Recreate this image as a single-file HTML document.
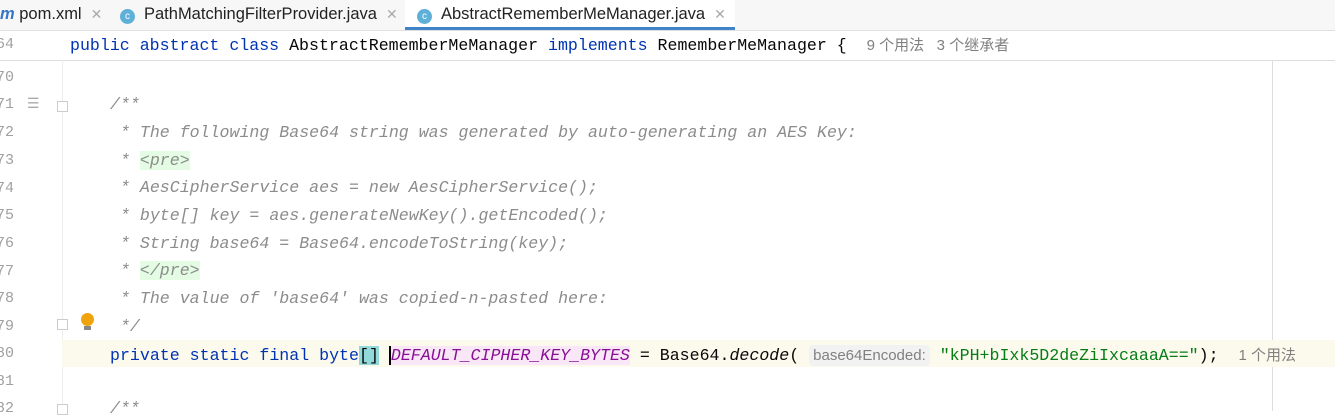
<!DOCTYPE html>
<html><head><meta charset="utf-8"><style>
body{margin:0;width:1335px;height:411px;overflow:hidden;background:#fff;font-family:"Liberation Mono",monospace;position:relative}
.tabs{position:absolute;left:0;top:0;width:1335px;height:30px;background:#f7f7f7;border-bottom:1px solid #e0e0e0;font-family:"Liberation Sans",sans-serif;font-size:16.5px;color:#222}
.tab{position:absolute;top:0;height:30px;line-height:28px;white-space:nowrap}
.ic{display:inline-block;width:15px;height:15px;border-radius:50%;background:#5fb0d8;color:#fff;font-size:10px;line-height:15px;text-align:center;vertical-align:0px;margin-right:9px}
.x{color:#aaa;margin-left:9px;font-size:14px}
.ln{position:absolute;left:-30px;width:44px;text-align:right;color:#a0a0a0;font-size:15px}
.code{position:absolute;left:70px;white-space:pre;font-size:16.6px;color:#080808}
.k{color:#0033b3}.c{color:#8c8c8c;font-style:italic}.s{color:#067d17}
.hint{font-family:"Liberation Sans","Noto Sans CJK SC",sans-serif;font-size:15px;color:#808080;font-style:normal}
.fold{position:absolute;left:57px;width:9px;height:9px;border:1px solid #ccc;background:#fff}
</style></head><body>
<div class="tabs">
<div class="tab" style="left:0"><span style="color:#3575c8;font-weight:bold;font-style:italic">m</span> pom.xml<span class="x">✕</span></div>
<div class="tab" style="left:120px"><span class="ic">c</span>PathMatchingFilterProvider.java<span class="x">✕</span></div>
<div class="tab" style="left:405px;width:330px;background:#fff;padding-left:12px;box-sizing:border-box;border-bottom:3px solid #4083c9"><span class="ic">c</span>AbstractRememberMeManager.java<span class="x">✕</span></div>
</div>
<div style="position:absolute;left:0;top:31px;width:1335px;height:29px;border-bottom:1px solid #ddd;background:#fff"></div>
<div style="position:absolute;left:62px;top:60px;width:1px;height:351px;background:#eee"></div>
<div style="position:absolute;left:1272px;top:60px;width:1px;height:351px;background:#ddd"></div>
<div style="position:absolute;left:0;top:340px;width:1335px;height:27px;background:#fcfaed"></div>
<div style="position:absolute;left:0;top:340px;width:62px;height:27px;background:#fff"></div>
<div class="ln" style="top:36px">64</div>
<div class="code" style="top:34px"><span class="k">public abstract class</span> AbstractRememberMeManager <span class="k">implements</span> RememberMeManager {  <span class="hint">9 个用法&nbsp;&nbsp; 3 个继承者</span></div>
<div class="ln" style="top:69px">70</div>
<div class="ln" style="top:96px">71</div>
<div style="position:absolute;left:27px;top:96px;color:#aaa;font-size:14px">☰</div>
<div class="fold" style="top:101px"></div>
<div class="code" style="top:95px;left:110px"><span class="c">/**</span></div>
<div class="ln" style="top:124px">72</div><div class="code c" style="top:123px;left:110px"> * The following Base64 string was generated by auto-generating an AES Key:</div>
<div class="ln" style="top:152px">73</div><div class="code c" style="top:151px;left:110px"> * <span style="background:#e3fce3">&lt;pre&gt;</span></div>
<div class="ln" style="top:180px">74</div><div class="code c" style="top:178px;left:110px"> * AesCipherService aes = new AesCipherService();</div>
<div class="ln" style="top:207px">75</div><div class="code c" style="top:206px;left:110px"> * byte[] key = aes.generateNewKey().getEncoded();</div>
<div class="ln" style="top:235px">76</div><div class="code c" style="top:234px;left:110px"> * String base64 = Base64.encodeToString(key);</div>
<div class="ln" style="top:263px">77</div><div class="code c" style="top:261px;left:110px"> * <span style="background:#e3fce3">&lt;/pre&gt;</span></div>
<div class="ln" style="top:290px">78</div><div class="code c" style="top:289px;left:110px"> * The value of 'base64' was copied-n-pasted here:</div>
<div class="ln" style="top:318px">79</div><div class="code c" style="top:317px;left:110px"> */</div>
<div class="fold" style="top:319px"></div>
<div style="position:absolute;left:81px;top:313px;width:13px;height:13px;border-radius:50%;background:#f0a30a"></div>
<div style="position:absolute;left:84px;top:326px;width:7px;height:4px;background:#888"></div>
<div class="ln" style="top:345px">80</div>
<div class="code" style="top:344px;left:110px"><span class="k">private static final</span> <span class="k">byte</span><span style="background:#93d9d9">[]</span> <span style="border-left:2px solid #000;background:#f9e6f7;color:#871094;font-style:italic">DEFAULT_CIPHER_KEY_BYTES</span> = Base64.<i>decode</i>( <span class="hint" style="background:#f2f2f2;border-radius:4px;padding:2px 4px">base64Encoded:</span> <span class="s">"kPH+bIxk5D2deZiIxcaaaA=="</span>);  <span class="hint">1 个用法</span></div>
<div class="ln" style="top:373px">81</div>
<div class="ln" style="top:400px">82</div>
<div class="fold" style="top:404px"></div>
<div class="code c" style="top:399px;left:110px">/**</div>
</body></html>
